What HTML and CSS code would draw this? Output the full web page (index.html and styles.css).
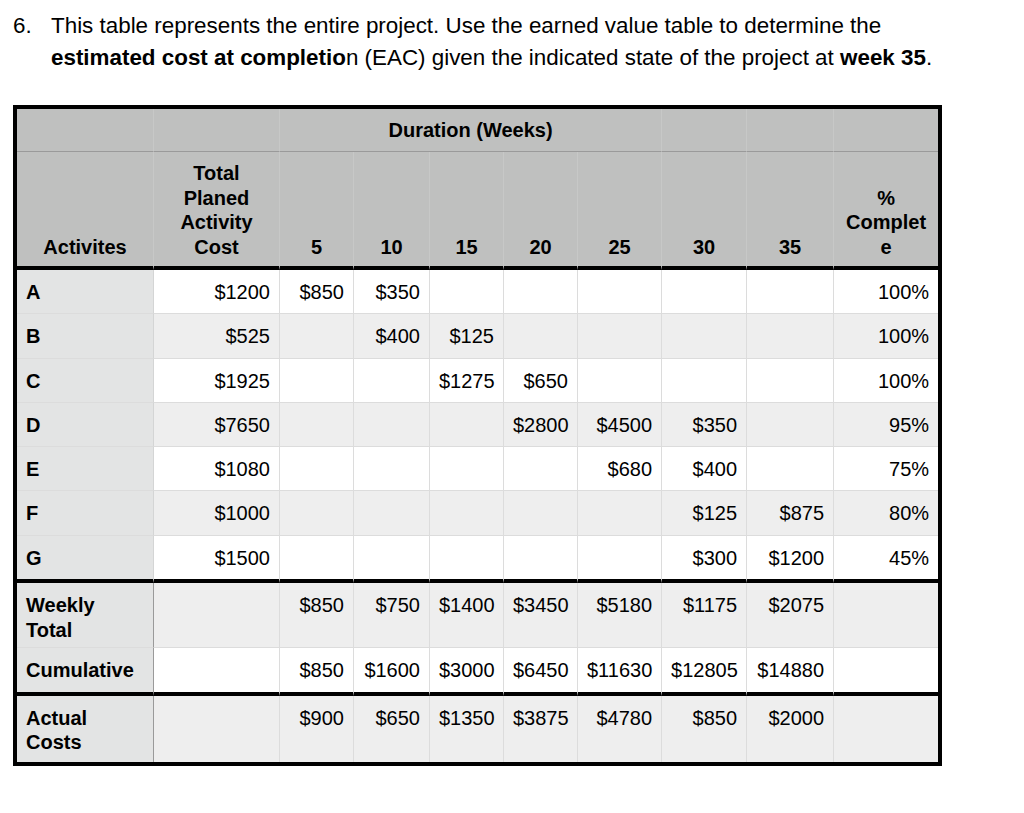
FILE: index.html
```html
<!DOCTYPE html>
<html lang="en">
<head>
<meta charset="utf-8">
<title>Earned value table</title>
<link rel="stylesheet" href="styles.css">
</head>
<body>
<div class="question">
  <span class="qnum">6.</span>
  <p class="qtext">This table represents the entire project. Use the earned value table to determine the<br><b>estimated cost at completio</b>n (EAC) given the indicated state of the project at <b>week 35</b>.</p>
</div>

<table class="ev">
  <colgroup>
    <col class="c1"><col class="c2"><col class="c3"><col class="c4"><col class="c5">
    <col class="c6"><col class="c7"><col class="c8"><col class="c9"><col class="c10">
  </colgroup>
  <thead>
    <tr class="h1">
      <th></th><th></th><th colspan="5">Duration (Weeks)</th><th></th><th></th><th class="last"></th>
    </tr>
    <tr class="h2">
      <th>Activites</th>
      <th>Total<br>Planed<br>Activity<br>Cost</th>
      <th>5</th><th>10</th><th>15</th><th>20</th><th>25</th><th>30</th><th>35</th>
      <th class="last">%<br>Complet<br>e</th>
    </tr>
  </thead>
  <tbody>
    <tr class="r"><td class="lbl">A</td><td>$1200</td><td>$850</td><td>$350</td><td></td><td></td><td></td><td></td><td></td><td class="last">100%</td></tr>
    <tr class="r alt"><td class="lbl">B</td><td>$525</td><td></td><td>$400</td><td>$125</td><td></td><td></td><td></td><td></td><td class="last">100%</td></tr>
    <tr class="r"><td class="lbl">C</td><td>$1925</td><td></td><td></td><td>$1275</td><td>$650</td><td></td><td></td><td></td><td class="last">100%</td></tr>
    <tr class="r alt"><td class="lbl">D</td><td>$7650</td><td></td><td></td><td></td><td>$2800</td><td>$4500</td><td>$350</td><td></td><td class="last">95%</td></tr>
    <tr class="r"><td class="lbl">E</td><td>$1080</td><td></td><td></td><td></td><td></td><td>$680</td><td>$400</td><td></td><td class="last">75%</td></tr>
    <tr class="r alt"><td class="lbl">F</td><td>$1000</td><td></td><td></td><td></td><td></td><td></td><td>$125</td><td>$875</td><td class="last">80%</td></tr>
    <tr class="r endsec"><td class="lbl">G</td><td>$1500</td><td></td><td></td><td></td><td></td><td></td><td>$300</td><td>$1200</td><td class="last">45%</td></tr>
  </tbody>
  <tbody class="totals">
    <tr class="tall alt"><td class="lbl">Weekly<br>Total</td><td class="sep"></td><td>$850</td><td>$750</td><td>$1400</td><td>$3450</td><td>$5180</td><td>$1175</td><td>$2075</td><td class="last"></td></tr>
    <tr class="r endsec"><td class="lbl">Cumulative</td><td class="sep"></td><td>$850</td><td>$1600</td><td>$3000</td><td>$6450</td><td>$11630</td><td>$12805</td><td>$14880</td><td class="last"></td></tr>
    <tr class="tall alt lastrow"><td class="lbl">Actual<br>Costs</td><td class="sep"></td><td>$900</td><td>$650</td><td>$1350</td><td>$3875</td><td>$4780</td><td>$850</td><td>$2000</td><td class="last"></td></tr>
  </tbody>
</table>
</body>
</html>
```

FILE: styles.css
```css
html, body {
  margin: 0;
  padding: 0;
  background: #ffffff;
}

body {
  font-family: "Liberation Sans", Arial, Helvetica, sans-serif;
  color: #000;
}

.question {
  display: flex;
  padding: 10px 0 0 13px;
  font-size: 22.4px;
  line-height: 32px;
}

.qnum {
  width: 38px;
  flex: none;
}

.qtext {
  margin: 0;
}

.ev {
  margin: 31px 0 0 13px;
  border: 4px solid #000;
  border-spacing: 0;
  border-collapse: separate;
  table-layout: fixed;
  width: 929px;
  font-size: 20px;
  line-height: 24.5px;
}

.c1 { width: 137px; }
.c2 { width: 126px; }
.c3 { width: 74px; }
.c4 { width: 76px; }
.c5 { width: 74px; }
.c6 { width: 74px; }
.c7 { width: 84px; }
.c8 { width: 85px; }
.c9 { width: 87px; }
.c10 { width: 104px; }

.ev th,
.ev td {
  box-sizing: border-box;
  padding: 0 9px;
  border-right: 1px solid #dcdcdc;
  border-bottom: 1px solid #dcdcdc;
  white-space: nowrap;
  overflow: hidden;
}

.ev .last {
  border-right: none;
}

.ev th {
  background: #bfc0bf;
  font-weight: bold;
  text-align: center;
  border-right-color: #c7c8c7;
}

.h1 { height: 43px; }
.h1 th {
  vertical-align: top;
  padding-top: 9px;
  border-bottom: 1px solid #9a9a9a;
}

.h2 { height: 118px; }
.h2 th {
  vertical-align: bottom;
  padding-bottom: 7px;
  border-bottom: 4px solid #000;
}

.ev td {
  vertical-align: top;
  padding-top: 10px;
  text-align: right;
  background: #ffffff;
}

.ev .alt td {
  background: #eeeeee;
}

.ev td.lbl {
  text-align: left;
  font-weight: bold;
  background: #e3e4e4;
  border-right-color: #d4d5d5;
}

.r { height: 44.3px; }
.tall { height: 65px; }

.ev .endsec td {
  border-bottom: 4px solid #000;
}
.r.endsec { height: 47.3px; }
.totals .r.endsec { height: 47.5px; }

.totals td.lbl {
  border-right-color: #9a9a9a;
}

.ev .lastrow td {
  border-bottom: none;
}
.tall.lastrow { height: 66px; }
```
